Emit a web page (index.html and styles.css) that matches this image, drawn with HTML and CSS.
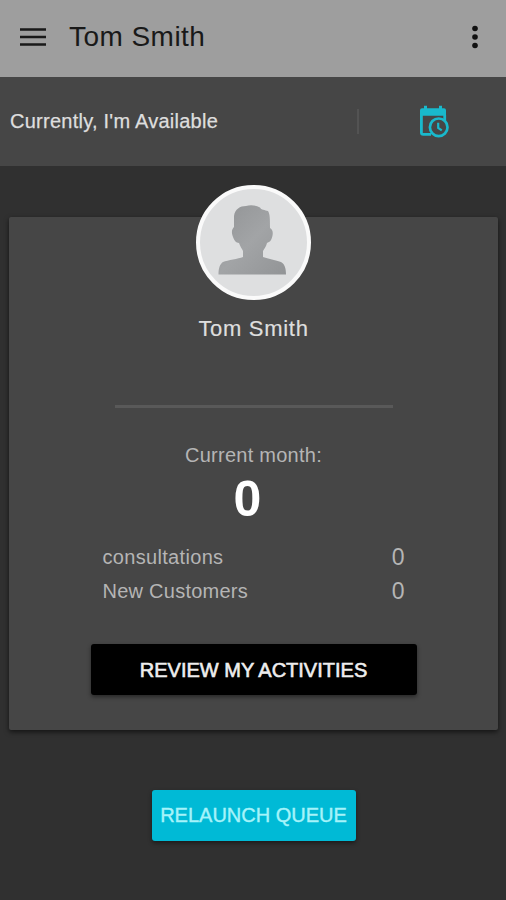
FILE: index.html
```html
<!DOCTYPE html>
<html lang="en">
<head>
<meta charset="utf-8">
<meta name="viewport" content="width=device-width">
<title>Tom Smith</title>
<link rel="stylesheet" href="styles.css">
</head>
<body>
<header class="appbar">
  <svg class="menu" width="26" height="18" viewBox="0 0 26 18" stroke="#191919" stroke-width="2.3"><path d="M0 1.5H26M0 9H26M0 16.5H26"/></svg>
  <h1 class="title">Tom Smith</h1>
  <svg class="more" width="6" height="24" viewBox="0 0 6 24" fill="#111"><circle cx="3" cy="3.5" r="2.8"/><circle cx="3" cy="12" r="2.8"/><circle cx="3" cy="20.5" r="2.8"/></svg>
</header>
<section class="status">
  <span class="status-text">Currently, I'm Available</span>
  <span class="divider"></span>
  <svg class="schedule" width="30" height="33" viewBox="0 0 30 33" fill="none" stroke="#19b9cc">
    <path d="M2.400 6V27.500Q2.400 29.400 4.300 29.400H12M25.700 10V15" stroke-width="2.800"/>
    <path d="M3 3.200H5V.8H8V3.200H20V.8H23V3.200H25Q27 3.200 27 5.200V10.800H1V5.200Q1 3.200 3 3.200Z" fill="#19b9cc" stroke="none"/>
    <circle cx="19.700" cy="22.300" r="8.800" fill="#464646" stroke-width="2.700"/>
    <path d="M19.200 17.800V22.800L22.800 25.300" stroke-width="2.200"/>
  </svg>
</section>
<main class="content">
  <section class="card">
    <div class="avatar">
      <svg width="106" height="106" viewBox="0 0 106 106">
        <defs><linearGradient id="person" x1="0" y1="0" x2="1" y2="1"><stop offset="0" stop-color="#919395"/><stop offset=".5" stop-color="#a2a4a6"/><stop offset="1" stop-color="#929496"/></linearGradient></defs>
        <path fill="url(#person)" d="M34 38V27C35 20 40 17 46 17C50 15.500 56 16 60 18.500C61 21 65 21 68 22C70 25 70 30 70 39C74 41 73 47 71 51C70 53 68 53 67 54C66 58 64 60 63 62V68C68 70 76 71 81 73C85 75 86 80 86 85.500H18.500C18.500 79 20 75 23 73C28 71 38 70 43 68V62C42 60 40 57 39 54C36 54 34 51 33 48C31 43 32 40 34 38Z"/>
      </svg>
    </div>
    <h2 class="name">Tom Smith</h2>
    <hr class="rule">
    <p class="period">Current month:</p>
    <p class="total">0</p>
    <dl class="stats">
      <div class="stat"><dt class="consultations">consultations</dt><dd>0</dd></div>
      <div class="stat"><dt>New Customers</dt><dd>0</dd></div>
    </dl>
    <button class="button review">REVIEW MY ACTIVITIES</button>
  </section>
  <button class="button relaunch">RELAUNCH QUEUE</button>
</main>
</body>
</html>
```
FILE: styles.css
```css
* { box-sizing: border-box; }
body {
  margin: 0;
  height: 900px;
  overflow: hidden;
  background: #303030;
  font-family: "Liberation Sans", Arial, sans-serif;
  font-size: 20px;
  color: #dedede;
}
h1, h2, p, dl, dd { margin: 0; font-weight: 400; }
svg { display: block; }
.appbar {
  display: flex;
  align-items: center;
  height: 77px;
  padding: 0 28px 3px 20px;
  background: #9e9e9e;
}
.title {
  margin-left: 23px;
  font-size: 28px;
  line-height: 32px;
  letter-spacing: .45px;
  color: #191919;
}
.more { margin-left: auto; }
.status {
  display: flex;
  align-items: center;
  height: 89px;
  padding: 0 57px 0 10px;
  background: #464646;
}
.status-text {
  width: 347px;
  letter-spacing: .25px;
  -webkit-text-stroke: .25px #dedede;
}
.divider { width: 2px; height: 25px; background: #535353; }
.schedule { margin-left: auto; }
.content {
  display: flex;
  flex-direction: column;
  align-items: center;
  padding: 51px 8px 0 9px;
}
.card {
  display: flex;
  flex-direction: column;
  align-items: center;
  width: 489px;
  height: 513px;
  background: #464646;
  border-radius: 2px;
  box-shadow: 0 2px 5px rgba(0, 0, 0, .6);
}
.avatar {
  width: 115px;
  height: 115px;
  margin-top: -32px;
  border: 4.500px solid #fafafa;
  border-radius: 50%;
  background: #dedfe0;
}
.name {
  margin-top: 16px;
  font-size: 22px;
  line-height: 26px;
  letter-spacing: .7px;
  -webkit-text-stroke: .2px #dedede;
}
.rule {
  width: 278px;
  height: 3px;
  margin: 63px 0 0;
  border: 0;
  background: #595959;
}
.period {
  margin-top: 35px;
  line-height: 24px;
  letter-spacing: .25px;
  color: #b5b5b5;
}
.total {
  margin: 4px 12px 0 0;
  font-size: 50px;
  font-weight: 700;
  line-height: 56px;
  color: #fff;
}
.stats {
  width: 302px;
  margin-top: 13px;
  color: #b5b5b5;
}
.stat {
  display: flex;
  align-items: center;
  justify-content: space-between;
  height: 34px;
}
.stat dt { letter-spacing: .25px; }
.stat .consultations { letter-spacing: .32px; }
.stat dd { font-size: 23px; }
.button {
  height: 51px;
  padding: 0;
  border: 0;
  border-radius: 3px;
  font: 20px "Liberation Sans", Arial, sans-serif;
  box-shadow: 0 2px 4px rgba(0, 0, 0, .45);
}
.review {
  width: 326px;
  margin-top: 36px;
  padding-top: 2px;
  background: #000;
  color: #eee;
  -webkit-text-stroke: .6px #eee;
}
.relaunch {
  width: 204px;
  margin-top: 60px;
  background: #00bad6;
  color: #a5f3fa;
  -webkit-text-stroke: .4px #a5f3fa;
}
```
